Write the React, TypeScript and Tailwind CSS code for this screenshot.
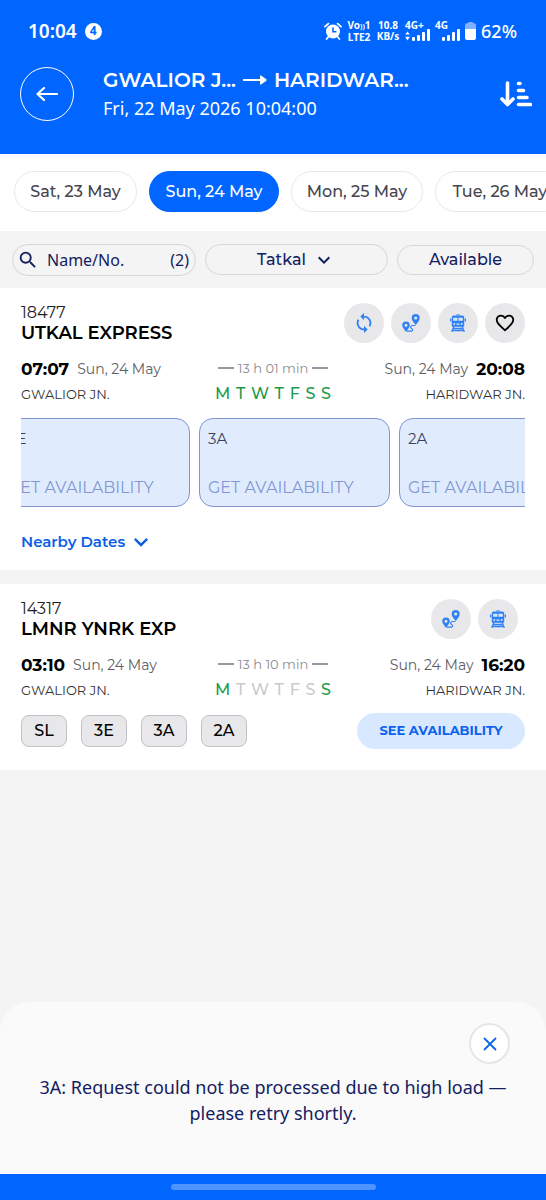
import { useEffect, useRef } from "react";
import type { ReactNode } from "react";
import { MdExpandMore, MdFavoriteBorder, MdSearch, MdSync } from "react-icons/md";

const dates = [
  { label: "Sat, 23 May", width: "w-[123px]", active: false },
  { label: "Sun, 24 May", width: "w-[130px]", active: true },
  { label: "Mon, 25 May", width: "w-[132px]", active: false },
  { label: "Tue, 26 May", width: "w-[130px]", active: false },
];

const weekdays = ["M", "T", "W", "T", "F", "S", "S"];

function AlarmIcon() {
  return (
    <svg className="h-[18px] w-[18px]" viewBox="0 0 18 18" fill="none" aria-hidden="true">
      <circle cx="9" cy="9.5" r="7" fill="#fff" />
      <path d="M1 4.6 4.4 1.6M17 4.6 13.6 1.6M4.2 15 2.6 17M13.8 15l1.6 2" stroke="#fff" strokeWidth="1.8" strokeLinecap="round" />
      <path d="M9 5.4v4.4h3.4" stroke="#0066ff" strokeWidth="1.6" />
    </svg>
  );
}

function SignalIcon({ network, data }: { network: string; data?: boolean }) {
  return (
    <div className="flex w-[25px] flex-col">
      <span className="text-[10px] leading-[8px] font-bold">{network}</span>
      <svg className="h-3 w-[25px]" viewBox="0 0 25 12" fill="#fff" aria-hidden="true">
        {data && <path d="M2.5 2.5 4.8 5.6H.2ZM2.5 11.5.2 7.8h4.6Z" />}
        <rect x="7" y="8" width="3" height="4" rx="1" />
        <rect x="12" y="6" width="3" height="6" rx="1" />
        <rect x="17" y="3" width="3" height="9" rx="1" />
        <rect x="22" y="0" width="3" height="12" rx="1" />
      </svg>
    </div>
  );
}

function BatteryIcon() {
  return (
    <svg className="h-[18px] w-[11px]" viewBox="0 0 11 18" aria-hidden="true">
      <path d="M3 1.2Q3 0 4 0h3q1 0 1 1.2h1.2Q11 1.2 11 3v4H0V3q0-1.8 1.8-1.8Z" fill="#80b3ff" />
      <path d="M0 7h11v9q0 2-2 2H2q-2 0-2-2Z" fill="#fff" />
    </svg>
  );
}

function SortIcon() {
  return (
    <svg className="h-[26px] w-8" viewBox="0 0 32 26" fill="none" stroke="#fff" strokeWidth="3.6" strokeLinecap="round" strokeLinejoin="round" aria-hidden="true">
      <path d="M7.5 2v21M2 18l5.5 5.5L13 18" />
      <path d="M18.5 2.5H20M18.5 9.5h5M18.5 16.5h8.5M18.5 23.5h12" />
    </svg>
  );
}

function RouteIcon() {
  return (
    <svg className="h-[18px] w-[18px]" viewBox="0 0 18 18" aria-hidden="true">
      <path d="M13.7 0a4 4 0 0 0-4 4c0 2.7 4 7 4 7s4-4.3 4-7a4 4 0 0 0-4-4Zm0 2.4a1.6 1.6 0 1 1 0 3.2 1.6 1.6 0 0 1 0-3.2Z" fill="#2f80f5" fillRule="evenodd" />
      <path d="M4 7.5a3.8 3.8 0 0 0-3.8 3.8c0 2.5 3.8 6.3 3.8 6.3s3.8-3.8 3.8-6.3A3.8 3.8 0 0 0 4 7.5Zm0 2.3a1.5 1.5 0 1 1 0 3 1.5 1.5 0 0 1 0-3Z" fill="#2f80f5" fillRule="evenodd" />
      <path d="M4.5 17.2h4.2c2.2 0 2.5-2 .9-2.7-1.6-.8-1.2-3 .8-3h3" fill="none" stroke="#2f80f5" strokeWidth="1.2" />
    </svg>
  );
}

function TrainIcon() {
  return (
    <svg className="h-[18px] w-4" viewBox="0 0 16 18" aria-hidden="true">
      <path d="M6 1.5 8 .3l2 1.2" fill="none" stroke="#2f80f5" strokeWidth=".8" />
      <path d="M3.5 1.6h9q1.7 0 1.7 1.7v9.4H1.8V3.3q0-1.7 1.7-1.7Z" fill="#2f80f5" />
      <path d="M3.2 3.8h4.3v2.9H3.2ZM8.5 3.8h4.3v2.9H8.5Z" fill="#dbe7f9" />
      <path d="M.7 4.5v3M15.3 4.5v3" stroke="#2f80f5" strokeWidth="1.3" />
      <circle cx="4.3" cy="9.9" r="1" fill="#dbe7f9" />
      <circle cx="11.7" cy="9.9" r="1" fill="#dbe7f9" />
      <path d="M6.5 9.5h3v1.3h-3Z" fill="#dbe7f9" />
      <path d="M4 12.5 1.6 17.8M12 12.5l2.4 5.3M3.3 14.5h9.4M2.3 16.5h11.4" fill="none" stroke="#2f80f5" strokeWidth="1.3" />
    </svg>
  );
}

function RoundButton({ label, children }: { label: string; children: ReactNode }) {
  return (
    <button type="button" aria-label={label} className="flex size-10 items-center justify-center rounded-full bg-[#e8e8ea]">
      {children}
    </button>
  );
}

function TrainCard(props: {
  number: string;
  name: string;
  departs: string;
  arrives: string;
  duration: string;
  runs: boolean[];
  actions: ReactNode;
  children: ReactNode;
}) {
  return (
    <article className="bg-white px-[21px] pt-[15px]">
      <div className="flex items-center justify-between">
        <div>
          <p className="text-base leading-5 text-[#222]">{props.number}</p>
          <h2 className="text-[18px] leading-5 font-semibold text-black">{props.name}</h2>
        </div>
        <div className="flex gap-[7px]">{props.actions}</div>
      </div>
      <div className="mt-[15px] grid grid-cols-[1fr_auto_1fr]">
        <div>
          <p className="flex items-center gap-2 leading-[22px] text-[#606066]">
            <strong className="text-[17px] leading-[22px] font-bold text-black">{props.departs}</strong>
            <span className="text-sm leading-[22px]">Sun, 24 May</span>
          </p>
          <p className="mt-1.5 text-[13px] leading-4 text-[#333]">GWALIOR JN.</p>
        </div>
        <div className="w-[116px]">
          <p className="flex items-center justify-center gap-1 text-[13px] leading-5 whitespace-nowrap text-[#8c8c94]">
            <span className="h-0.5 w-4 bg-[#9999a0]" />
            {props.duration}
            <span className="h-0.5 w-4 bg-[#9999a0]" />
          </p>
          <p className="mt-1.5 flex justify-between text-base leading-5 font-medium">
            {weekdays.map((day, i) => (
              <span key={i} className={props.runs[i] ? "text-[#1b9a4a]" : "text-[#cacace]"}>
                {day}
              </span>
            ))}
          </p>
        </div>
        <div className="flex flex-col items-end">
          <p className="flex items-center gap-2 leading-[22px] text-[#606066]">
            <span className="text-sm leading-[22px]">Sun, 24 May</span>
            <strong className="text-[17px] leading-[22px] font-bold text-black">{props.arrives}</strong>
          </p>
          <p className="mt-1.5 text-[13px] leading-4 text-[#333]">HARIDWAR JN.</p>
        </div>
      </div>
      {props.children}
    </article>
  );
}

function ClassStrip() {
  const strip = useRef<HTMLDivElement>(null);
  useEffect(() => {
    if (strip.current) strip.current.scrollLeft = 22;
  }, []);
  return (
    <div ref={strip} className="mt-3.5 flex gap-[9px] overflow-x-auto [scrollbar-width:none]">
      {["3E", "3A", "2A"].map((code) => (
        <button key={code} type="button" className="flex h-[89px] w-[191px] shrink-0 flex-col items-start justify-between rounded-[14px] border border-[#7f94d0] bg-[#e0ecfd] px-2 pt-2.5 pb-2 text-left whitespace-nowrap">
          <span className="text-[15px] leading-5 text-[#3b4258]">{code}</span>
          <span className="text-base leading-5 text-[#8196d3]">GET AVAILABILITY</span>
        </button>
      ))}
    </div>
  );
}

export default function App() {
  return (
    <div className="flex min-h-screen flex-col bg-[#f4f4f4] font-['Montserrat','Inter',sans-serif]">
      <header className="h-[154px] bg-[#0066ff] text-white">
        <div className="flex items-center justify-between pt-[17px] pr-[29px] pl-7 font-['Noto_Sans',sans-serif]">
          <div className="flex h-7 items-center gap-2">
            <span className="text-[19px] font-semibold">10:04</span>
            <span className="flex size-[17px] items-center justify-center rounded-full bg-white text-xs font-bold text-[#0066ff]">4</span>
          </div>
          <div className="flex h-7 items-center gap-[5px]">
            <AlarmIcon />
            <div className="flex w-6 flex-col items-center text-[10px] leading-[11px] font-bold whitespace-nowrap">
              <span>Vo<span className="text-[7px]">))</span>1</span>
              <span>LTE2</span>
            </div>
            <div className="flex w-6 flex-col items-center text-[10px] leading-[11px] font-bold whitespace-nowrap">
              <span>10.8</span>
              <span>KB/s</span>
            </div>
            <SignalIcon network="4G+" data />
            <SignalIcon network="4G" />
            <BatteryIcon />
            <span className="text-[18px] font-medium">62%</span>
          </div>
        </div>
        <div className="mt-[21px] flex items-center pr-3.5 pl-5">
          <button type="button" aria-label="Back" className="flex size-[54px] shrink-0 items-center justify-center rounded-full border border-white">
            <svg className="h-4 w-[22px]" viewBox="0 0 22 16" fill="none" stroke="#fff" strokeWidth="2.2" strokeLinecap="round" strokeLinejoin="round" aria-hidden="true">
              <path d="M8 2 1.5 8 8 14M2 8h19" />
            </svg>
          </button>
          <div className="ml-[29px] flex-1">
            <h1 className="flex items-center gap-[7px] text-[20px] leading-7 font-semibold whitespace-nowrap">
              GWALIOR J...
              <svg className="h-2.5 w-6" viewBox="0 0 24 10" fill="#fff" aria-hidden="true">
                <path d="M0 4h17V1.2Q17 0 18 .5l5 3.5q1 1 0 2l-5 3.5q-1 .5-1-.7V6H0Z" />
              </svg>
              HARIDWAR...
            </h1>
            <p className="font-['Noto_Sans',sans-serif] text-[18px] leading-7">Fri, 22 May 2026 10:04:00</p>
          </div>
          <button type="button" aria-label="Sort">
            <SortIcon />
          </button>
        </div>
      </header>

      <nav aria-label="Travel dates" className="flex gap-3 overflow-hidden bg-white pt-[17px] pb-[19px] pl-3.5">
        {dates.map((date) => (
          <button
            key={date.label}
            type="button"
            className={`h-[41px] shrink-0 rounded-full border text-base font-medium whitespace-nowrap ${date.width} ${
              date.active ? "border-[#0066ff] bg-[#0066ff] text-white" : "border-[#e8e8ec] text-[#45454f]"
            }`}
          >
            {date.label}
          </button>
        ))}
      </nav>

      <div className="flex h-[57px] items-center gap-[9px] px-3 text-base text-[#13205f]">
        <label className="flex h-8 w-[184px] items-center rounded-full border border-[#d6d6da] pr-1.5 pl-1 font-['Noto_Sans',sans-serif]">
          <MdSearch className="size-[22px] shrink-0" aria-hidden="true" />
          <input aria-label="Name or number" placeholder="Name/No." className="ml-2 w-full min-w-0 bg-transparent outline-none placeholder:text-[#13205f]" />
          <span>(2)</span>
        </label>
        <label className="flex h-[31px] flex-1 items-center justify-center gap-1.5 rounded-full border border-[#d6d6da]">
          <select aria-label="Quota" className="field-sizing-content appearance-none bg-transparent font-medium outline-none">
            <option>Tatkal</option>
          </select>
          <MdExpandMore className="size-6" aria-hidden="true" />
        </label>
        <button type="button" className="h-[30px] w-[137px] rounded-full border border-[#d6d6da] font-medium">Available</button>
      </div>

      <main className="flex flex-1 flex-col gap-3.5">
        <TrainCard
          number="18477"
          name="UTKAL EXPRESS"
          departs="07:07"
          arrives="20:08"
          duration="13 h 01 min"
          runs={[true, true, true, true, true, true, true]}
          actions={
            <>
              <RoundButton label="Refresh"><MdSync className="size-[22px] text-[#2f80f5]" /></RoundButton>
              <RoundButton label="Route"><RouteIcon /></RoundButton>
              <RoundButton label="Train status"><TrainIcon /></RoundButton>
              <RoundButton label="Favourite"><MdFavoriteBorder className="size-[22px] text-black" /></RoundButton>
            </>
          }
        >
          <ClassStrip />
          <button type="button" className="mt-[21px] mb-3.5 flex h-7 items-center gap-0.5 text-[15px] font-semibold text-[#0a5fe6]">
            Nearby Dates
            <MdExpandMore className="size-7" aria-hidden="true" />
          </button>
        </TrainCard>

        <TrainCard
          number="14317"
          name="LMNR YNRK EXP"
          departs="03:10"
          arrives="16:20"
          duration="13 h 10 min"
          runs={[true, false, false, false, false, false, true]}
          actions={
            <div className="mr-[7px] flex gap-[7px]">
              <RoundButton label="Route"><RouteIcon /></RoundButton>
              <RoundButton label="Train status"><TrainIcon /></RoundButton>
            </div>
          }
        >
          <div className="mt-[13px] flex items-center justify-between pb-[21px]">
            <div className="flex gap-3.5">
              {["SL", "3E", "3A", "2A"].map((code) => (
                <button key={code} type="button" className="h-8 w-[46px] rounded-lg border border-[#c2c2c6] bg-[#e8e8ea] text-base font-medium text-black">
                  {code}
                </button>
              ))}
            </div>
            <button type="button" className="h-9 w-[168px] rounded-full bg-[#d8e8ff] text-[13px] font-bold text-[#0a62ee]">
              SEE AVAILABILITY
            </button>
          </div>
        </TrainCard>
      </main>

      <aside role="alert" className="h-[172px] rounded-t-[30px] bg-[#fafafa] px-6 pt-[21px] font-['Noto_Sans',sans-serif] text-[#13205f]">
        <div className="flex justify-end pr-3">
          <button type="button" aria-label="Close" className="flex size-[41px] items-center justify-center rounded-full border-2 border-[#e6e6e8] bg-white">
            <svg className="size-3.5" viewBox="0 0 14 14" fill="none" stroke="#0a66e6" strokeWidth="1.8" strokeLinecap="round" aria-hidden="true">
              <path d="m1.500 1.500 11 11M12.500 1.500l-11 11" />
            </svg>
          </button>
        </div>
        <p className="mt-2.5 text-center text-[18px] leading-[26px]">
          3A: Request could not be processed due to high load — please retry shortly.
        </p>
      </aside>
      <footer className="flex h-[26px] items-center justify-center bg-[#0066ff]">
        <span className="h-1.5 w-[205px] rounded-full bg-[#4d94ff]" />
      </footer>
    </div>
  );
}
